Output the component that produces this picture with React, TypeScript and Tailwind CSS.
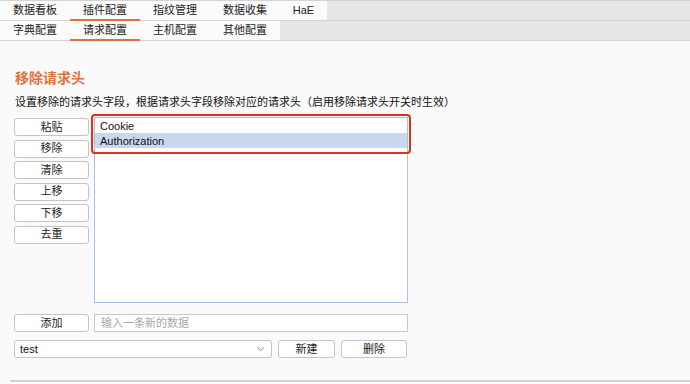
import React from 'react';

const font = { fontFamily: '"Liberation Sans", "Noto Sans CJK SC", sans-serif' };

const topTabs = ['数据看板', '插件配置', '指纹管理', '数据收集', 'HaE'];
const subTabs = ['字典配置', '请求配置', '主机配置', '其他配置'];
const actions = ['粘贴', '移除', '清除', '上移', '下移', '去重'];

const TabRow: React.FC<{ tabs: string[]; active: number; widths: string[] }> = ({ tabs, active, widths }) => (
  <div className="flex h-[20px] border-b border-[#d4d4d4]">
    {tabs.map((t, i) => (
      <div
        key={t}
        className={`${widths[i]} relative flex items-center justify-center bg-[#fbfbfb] text-[11px] text-[#222]`}
      >
        {t}
        {i === active && <div className="absolute bottom-[-1px] left-0 right-0 h-[2px] bg-[#e2703f]" />}
      </div>
    ))}
    <div className="flex-1 bg-[#e6e6e6]" />
  </div>
);

const Btn: React.FC<{ label: string; className?: string }> = ({ label, className }) => (
  <button
    className={`h-[18px] rounded-[3px] border border-[#c4c4c4] bg-white text-[11px] leading-none text-[#222] ${className ?? 'w-[75px]'}`}
  >
    {label}
  </button>
);

export default function App() {
  return (
    <div className="w-[690px] h-[384px] overflow-hidden bg-[#fafafa]" style={font}>
      <div className="border-t border-[#d4d4d4]">
        <TabRow
          tabs={topTabs}
          active={1}
          widths={['w-[70px]', 'w-[70px]', 'w-[70px]', 'w-[70px]', 'w-[47px]']}
        />
        <TabRow tabs={subTabs} active={1} widths={['w-[70px]', 'w-[70px]', 'w-[70px]', 'w-[70px]']} />
      </div>

      <div className="pl-[14px] pr-[10px]">
        <h2 className="mt-[29px] pl-[1px] text-[14px] leading-[16px] font-bold text-[#e2703f]">移除请求头</h2>
        <p className="mt-[9px] pl-[1px] text-[11px] leading-[14px] text-[#111]">
          设置移除的请求头字段，根据请求头字段移除对应的请求头（启用移除请求头开关时生效）
        </p>

        <div className="mt-[8px] flex gap-[5px]">
          <div className="flex flex-col gap-[3.5px] pt-[1px]">
            {actions.map(a => (
              <Btn key={a} label={a} />
            ))}
          </div>
          <div className="relative h-[186px] w-[314px] border border-[#a9c3de] bg-white">
            <div className="h-[15px] pl-[5px] text-[11px] leading-[16px] text-[#111]">Cookie</div>
            <div className="h-[15px] bg-[#c9d8ec] pl-[5px] text-[11px] leading-[16px] text-[#111]">Authorization</div>
            <div className="absolute left-[-4px] top-[-4px] h-[40px] w-[320px] rounded-[4px] border-2 border-[#d8311c]" />
          </div>
        </div>

        <div className="mt-[11px] flex gap-[5px]">
          <Btn label="添加" />
          <div className="flex h-[18px] w-[314px] items-center border border-[#c9c9c9] bg-white pl-[6px] text-[11px] text-[#a8a8a8]">
            输入一条新的数据
          </div>
        </div>

        <div className="mt-[8px] flex gap-[6px]">
          <div className="flex h-[18px] w-[258px] items-center justify-between rounded-[3px] border border-[#c4c4c4] bg-white px-[5px] text-[11px] text-[#111]">
            <span>test</span>
            <svg width="9" height="6" viewBox="0 0 9 6" className="mr-[1px]">
              <path d="M1 1.5 L4.5 4.5 L8 1.5" fill="none" stroke="#888" strokeWidth="1" />
            </svg>
          </div>
          <Btn label="新建" className="w-[57px]" />
          <Btn label="删除" className="w-[66px]" />
        </div>
      </div>

      <div className="ml-[10px] mt-[22px] h-[2px] bg-[#d3d3d3]" />
    </div>
  );
}
